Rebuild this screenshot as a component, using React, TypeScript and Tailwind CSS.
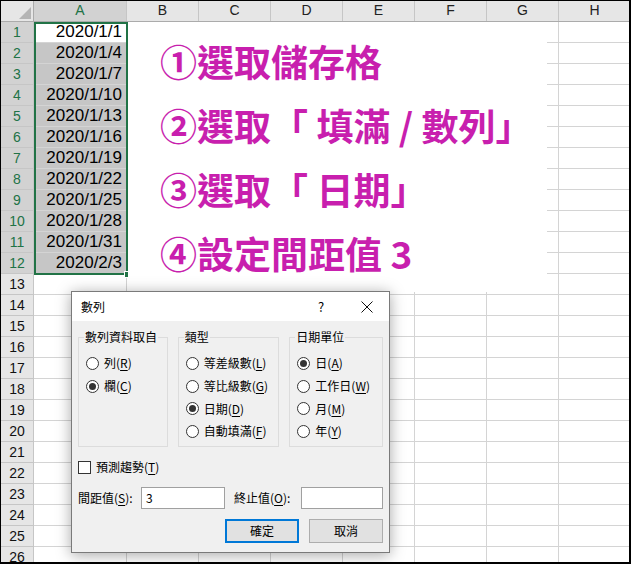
import React from 'react';

const columns = [
  { name: 'A', w: 'w-[93px]' },
  { name: 'B', w: 'w-[72px]' },
  { name: 'C', w: 'w-[72px]' },
  { name: 'D', w: 'w-[72px]' },
  { name: 'E', w: 'w-[72px]' },
  { name: 'F', w: 'w-[72px]' },
  { name: 'G', w: 'w-[72px]' },
  { name: 'H', w: 'w-[72px]' },
];

const dates = [
  '2020/1/1', '2020/1/4', '2020/1/7', '2020/1/10', '2020/1/13', '2020/1/16',
  '2020/1/19', '2020/1/22', '2020/1/25', '2020/1/28', '2020/1/31', '2020/2/3',
];

const rows = Array.from({ length: 26 }, (_, i) => i + 1);

const steps = ['①選取儲存格', '②選取「 填滿 / 數列」', '③選取「 日期」', '④設定間距值 3'];

function Key({ k }: { k: string }) {
  return (
    <>
      (<span className="underline underline-offset-2">{k}</span>)
    </>
  );
}

function Radio({ label, k, checked = false }: { label: string; k: string; checked?: boolean }) {
  return (
    <div className="flex items-center h-[22.7px]">
      <span className="w-[13px] h-[13px] rounded-full border border-[#333] bg-white flex items-center justify-center shrink-0">
        {checked && <span className="w-[7px] h-[7px] rounded-full bg-[#333]" />}
      </span>
      <span className="ml-[5px] whitespace-nowrap">
        {label}
        <Key k={k} />
      </span>
    </div>
  );
}

function Group({ title, w, children }: { title: string; w: string; children: React.ReactNode }) {
  return (
    <div className={`relative border border-[#dcdcdc] h-[110px] ${w} pl-[7px] pt-[14px]`}>
      <span className="absolute -top-[9px] left-[5px] px-[1px] bg-[#f0f0f0] leading-[16px]">{title}</span>
      {children}
    </div>
  );
}

function SeriesDialog() {
  return (
    <div className="absolute left-[70px] top-[290px] w-[319px] h-[262px] border border-[#7a7a7a] bg-[#f0f0f0] shadow-[0_2px_14px_rgba(0,0,0,0.35)] flex flex-col text-[12px] text-black font-['Noto_Sans_CJK_TC','Noto_Sans_CJK_SC',sans-serif]">
      {/* Title bar */}
      <div className="h-[29px] bg-white flex items-center pl-[9px] pr-[5px]">
        <span className="flex-1">數列</span>
        <span className="w-[30px] text-center text-[13px] mr-[14px]">?</span>
        <span className="w-[34px] flex items-center justify-center">
          <svg width="12" height="12" viewBox="0 0 12 12">
            <path d="M0.5 0.5 L11.5 11.5 M11.5 0.5 L0.5 11.5" stroke="#111" strokeWidth="1" />
          </svg>
        </span>
      </div>

      {/* Body */}
      <div className="flex-1 flex flex-col px-[6px] pt-[16px]">
        <div className="flex gap-[10px]">
          <Group title="數列資料取自" w="w-[90px]">
            <Radio label="列" k="R" />
            <Radio label="欄" k="C" checked />
          </Group>
          <Group title="類型" w="w-[102px]">
            <Radio label="等差級數" k="L" />
            <Radio label="等比級數" k="G" />
            <Radio label="日期" k="D" checked />
            <Radio label="自動填滿" k="F" />
          </Group>
          <Group title="日期單位" w="w-[94px]">
            <Radio label="日" k="A" checked />
            <Radio label="工作日" k="W" />
            <Radio label="月" k="M" />
            <Radio label="年" k="Y" />
          </Group>
        </div>

        <div className="flex items-center h-[16px] mt-[12px]">
          <span className="w-[13px] h-[13px] border border-[#333] bg-white" />
          <span className="ml-[5px]">
            預測趨勢
            <Key k="T" />
          </span>
        </div>

        <div className="flex items-center h-[22px] mt-[12px]">
          <span className="w-[63px] whitespace-nowrap">
            間距值
            <Key k="S" />:
          </span>
          <span className="w-[84px] h-[22px] border border-[#a0a0a0] bg-white flex items-center pl-[4px]">3</span>
          <span className="ml-[9px] w-[67px] whitespace-nowrap">
            終止值
            <Key k="O" />:
          </span>
          <span className="w-[82px] h-[22px] border border-[#a0a0a0] bg-white" />
        </div>

        <div className="flex justify-end gap-[10px] mt-[10px]">
          <button className="w-[74px] h-[24px] border-2 border-[#0078d7] bg-[#e1e1e1] flex items-center justify-center">
            確定
          </button>
          <button className="w-[74px] h-[24px] border border-[#adadad] bg-[#e1e1e1] flex items-center justify-center">
            取消
          </button>
        </div>
      </div>
    </div>
  );
}

export default function App() {
  return (
    <div className="relative w-[631px] h-[564px] overflow-hidden bg-white border-t border-l border-r-2 border-b-2 border-black font-['Liberation_Sans',Arial,sans-serif]">
      {/* Column header */}
      <div className="flex h-[21px] bg-[#e6e6e6] border-b border-[#ababab]">
        <div className="w-[33px] h-full border-r border-[#ababab] relative shrink-0">
          <svg className="absolute right-[2px] bottom-[2px]" width="12" height="12" viewBox="0 0 12 12">
            <path d="M12 0 L12 12 L0 12 Z" fill="#b4b4b4" />
          </svg>
        </div>
        {columns.map((c, i) => (
          <div
            key={c.name}
            className={`${c.w} shrink-0 h-full flex items-center justify-center pb-[2px] text-[14px] border-r border-[#c6c6c6] ${
              i === 0 ? 'bg-[#d2d2d2] text-[#217346]' : 'text-[#222]'
            }`}
          >
            {c.name}
          </div>
        ))}
      </div>

      {/* Rows */}
      {rows.map((r) => {
        const selected = r <= 12;
        return (
          <div key={r} className="flex h-[21px]">
            <div
              className={`w-[33px] shrink-0 h-full flex items-center justify-center pt-[1px] text-[14px] border-r border-b border-[#c6c6c6] ${
                selected ? 'bg-[#d2d2d2] text-[#217346]' : 'bg-[#e6e6e6] text-[#111]'
              }`}
            >
              {r}
            </div>
            {columns.map((c, i) => (
              <div
                key={c.name}
                className={`${c.w} shrink-0 h-full border-r border-b border-[#d4d4d4] flex items-center justify-end pr-[4px] text-[17px] text-black ${
                  i === 0 && selected && r > 1 ? 'bg-[#c6c6c6]' : ''
                }`}
              >
                {i === 0 && selected ? dates[r - 1] : ''}
              </div>
            ))}
          </div>
        );
      })}

      {/* Selection border A1:A12 */}
      <div className="absolute left-[33px] top-[21px] w-[94px] h-[253px] border-2 border-[#217346] pointer-events-none">
        <span className="absolute -right-[5px] -bottom-[5px] w-[7px] h-[7px] bg-[#217346] border border-white" />
      </div>

      {/* Pasted instruction text */}
      <div className="absolute left-[127px] top-[21px] w-[419px] h-[270px] bg-white pl-[32px] pt-[7px] flex flex-col text-[37px] font-semibold leading-[64px] text-[#c81fae] font-['Noto_Sans_CJK_TC',sans-serif]">
        {steps.map((s) => (
          <div key={s} className="whitespace-pre">
            {s}
          </div>
        ))}
      </div>

      <SeriesDialog />
    </div>
  );
}
